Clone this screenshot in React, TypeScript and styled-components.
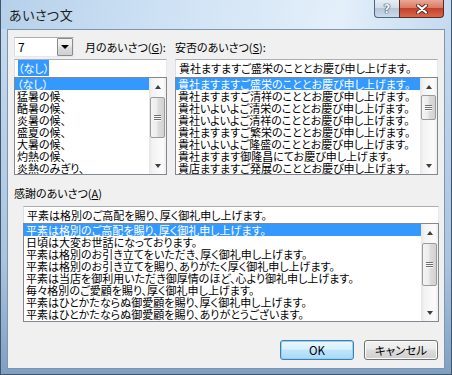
import * as React from 'react'
import styled, { createGlobalStyle } from 'styled-components';

const GlobalStyle = createGlobalStyle`
	html, body {
		margin: 0;
		padding: 0;
		background: #ffffff;
	}
	* {
		box-sizing: border-box;
	}
`

const uiFont = `"Noto Sans CJK JP", "Noto Sans", sans-serif`

const Window = styled.div`
	width: 452px;
	height: 375px;
	display: flex;
	flex-direction: column;
	padding: 0 6px 5px 6px;
	border: 1px solid #40566f;
	border-top: none;
	background: linear-gradient(to bottom, #c3d9ef 0, #c4d9ee 40px, #aac4df 70%, #7f9fc2 100%);
	font-family: ${uiFont};
	font-feature-settings: "palt";
	font-size: 11px;
	color: #000;
`

const TitleBar = styled.div`
	height: 29px;
	margin: 0 -6px;
	padding: 0 7px 0 8px;
	display: flex;
	justify-content: space-between;
	background: linear-gradient(100deg, #b6d0ea 0%, #cde1f4 35%, #e4effa 75%, #d7e7f6 85%, #c4daef 100%);
`

const Title = styled.span`
	align-self: center;
	margin-top: -1px;
	font-size: 13px;
	color: #1b1b1b;
	letter-spacing: 0.5px;
`

const CaptionButtons = styled.div`
	display: flex;
	align-self: flex-start;
`

const HelpButton = styled.div`
	width: 25px;
	height: 18px;
	border: 1px solid #4d6684;
	border-top: none;
	border-right: none;
	border-radius: 0 0 0 4px;
	background: linear-gradient(to bottom, #e6edf5 0, #d3dde8 45%, #b6c6d8 50%, #cbdbea 100%);
	display: flex;
	justify-content: center;
	align-items: center;
	font-family: "DejaVu Sans", sans-serif;
	font-weight: bold;
	font-size: 12px;
	color: #f4f6f8;
	text-shadow: 0 0 1px #2c3d52, 0 0 1px #2c3d52, 0 0 1px #2c3d52;
`

const CloseButton = styled.div`
	width: 45px;
	height: 18px;
	border: 1px solid #5b2a24;
	border-top: none;
	border-radius: 0 0 4px 0;
	background: linear-gradient(to bottom, #e9a898 0, #dc7a64 45%, #c4402a 50%, #d7694d 100%);
	display: flex;
	justify-content: center;
	align-items: center;
`

const Client = styled.div`
	flex: 1;
	display: flex;
	flex-direction: column;
	background: #f0f0f0;
	border: 1px solid #7f95ad;
	padding: 7px 5px 0 6px;
`

const TopGrid = styled.div`
	display: grid;
	grid-template-columns: 153px 263px;
	column-gap: 8px;
	row-gap: 2px;
`

const LabelRow = styled.div`
	height: 20px;
	display: flex;
	align-items: center;
`

const Label = styled.span<{ $indent?: number }>`
	line-height: 13px;
	margin-left: ${p => p.$indent || 0}px;
	white-space: nowrap;
`

const Combo = styled.div`
	width: 60px;
	height: 20px;
	flex-shrink: 0;
	display: flex;
	background: #fff;
	border: 1px solid #abadb3;
	border-left-color: #dbdfe6;
	border-right-color: #e3e9ef;
	border-bottom-color: #e3e9ef;
`

const ComboText = styled.span`
	flex: 1;
	padding: 2px 0 0 3px;
	line-height: 14px;
	font-size: 12px;
`

const DropButton = styled.div`
	width: 16px;
	border: 1px solid #8b8b8b;
	border-radius: 1px;
	background: linear-gradient(to bottom, #f2f2f2 0, #ebebeb 45%, #dddddd 50%, #cfcfcf 100%);
	display: flex;
	justify-content: center;
	align-items: center;
	&::after {
		content: "";
		border-left: 4px solid transparent;
		border-right: 4px solid transparent;
		border-top: 4px solid #000;
	}
`

const Stack = styled.div`
	display: flex;
	flex-direction: column;
`

const Edit = styled.div<{ $height: number }>`
	height: ${p => p.$height}px;
	background: #fff;
	border: 1px solid #abadb3;
	border-left-color: #dbdfe6;
	border-right-color: #e3e9ef;
	border-bottom: none;
	padding: 2px 2px 0 3px;
	line-height: 13px;
	white-space: nowrap;
	overflow: hidden;
`

const EditSelection = styled.span`
	background: #3399ff;
	color: #fff;
`

const ListBox = styled.div<{ $height: number }>`
	height: ${p => p.$height}px;
	display: flex;
	background: #fff;
	border: 1px solid #828790;
`

const Items = styled.div`
	flex: 1;
	overflow: hidden;
`

const Item = styled.div<{ $selected?: boolean }>`
	height: 12px;
	line-height: 12px;
	padding-left: 2px;
	white-space: nowrap;
	background: ${p => (p.$selected ? '#3399ff' : 'transparent')};
	color: ${p => (p.$selected ? '#fff' : '#000')};
`

const ScrollBar = styled.div`
	width: 17px;
	flex-shrink: 0;
	display: flex;
	flex-direction: column;
	background: linear-gradient(to right, #e6e6e6 0, #f3f3f3 20%, #fbfbfb 80%, #eeeeee 100%);
`

const Arrow = styled.div<{ $down?: boolean }>`
	height: 17px;
	display: flex;
	justify-content: center;
	align-items: center;
	&::after {
		content: "";
		border-left: 3.5px solid transparent;
		border-right: 3.5px solid transparent;
		${p => (p.$down ? 'border-top: 4px solid #3f3f3f;' : 'border-bottom: 4px solid #3f3f3f;')}
	}
`

const Track = styled.div`
	flex: 1;
	position: relative;
`

const Thumb = styled.div`
	position: absolute;
	left: 1px;
	right: 1px;
	border: 1px solid #9a9a9a;
	border-radius: 2px;
	background: linear-gradient(to right, #f4f4f4 0, #ececec 45%, #dcdcdc 55%, #d2d2d2 100%);
	display: flex;
	flex-direction: column;
	justify-content: center;
	align-items: center;
	gap: 1px;
`

const Grip = styled.span`
	width: 7px;
	height: 1px;
	background: #6f6f6f;
	box-shadow: 0 1px 0 #fafafa;
`

const SectionLabel = styled.div`
	margin-top: 12px;
	line-height: 13px;
`

const Lower = styled.div`
	margin: 6px 0 0 9px;
	display: flex;
	flex-direction: column;
`

const ButtonRow = styled.div`
	margin-top: 18px;
	padding-right: 1px;
	display: flex;
	justify-content: flex-end;
	gap: 10px;
`

const Button = styled.div<{ $default?: boolean }>`
	width: 74px;
	height: 20px;
	display: flex;
	justify-content: center;
	align-items: center;
	border-radius: 3px;
	border: 1px solid ${p => (p.$default ? '#3c7fb1' : '#707070')};
	background: ${p => (p.$default
		? 'linear-gradient(to bottom, #eaf6fd 0, #d9f0fc 45%, #bee6fd 50%, #a7d9f5 100%)'
		: 'linear-gradient(to bottom, #f2f2f2 0, #ebebeb 45%, #dddddd 50%, #cfcfcf 100%)')};
	box-shadow: inset 0 0 0 1px ${p => (p.$default ? '#98d1ef' : '#fcfcfc')};
	font-size: 11.5px;
`

const monthItems = ['（なし）', '猛暑の候、', '酷暑の候、', '炎暑の候、', '盛夏の候、', '大暑の候、', '灼熱の候、', '炎熱のみぎり、']

const healthItems = [
	'貴社ますますご盛栄のこととお慶び申し上げます。',
	'貴社ますますご清祥のこととお慶び申し上げます。',
	'貴社いよいよご清栄のこととお慶び申し上げます。',
	'貴社いよいよご清祥のこととお慶び申し上げます。',
	'貴社ますますご繁栄のこととお慶び申し上げます。',
	'貴社いよいよご隆盛のこととお慶び申し上げます。',
	'貴社ますます御隆昌にてお慶び申し上げます。',
	'貴店ますますご発展のこととお慶び申し上げます。',
]

const thanksItems = [
	'平素は格別のご高配を賜り、厚く御礼申し上げます。',
	'日頃は大変お世話になっております。',
	'平素は格別のお引き立てをいただき、厚く御礼申し上げます。',
	'平素は格別のお引き立てを賜り、ありがたく厚く御礼申し上げます。',
	'平素は当店を御利用いただき御厚情のほど、心より御礼申し上げます。',
	'毎々格別のご愛顧を賜り、厚く御礼申し上げます。',
	'平素はひとかたならぬ御愛顧を賜り、厚く御礼申し上げます。',
	'平素はひとかたならぬ御愛顧を賜り、ありがとうございます。',
]

type ListProps = {
	items: string[]
	height: number
	thumbTop: number
	thumbHeight: number
}

const List = ({ items, height, thumbTop, thumbHeight }: ListProps) => (
	<ListBox $height={height}>
		<Items>
			{items.map((text, i) => (
				<Item key={text} $selected={i === 0}>{text}</Item>
			))}
		</Items>
		<ScrollBar>
			<Arrow />
			<Track>
				<Thumb style={{ top: thumbTop, height: thumbHeight }}>
					<Grip />
					<Grip />
					<Grip />
				</Thumb>
			</Track>
			<Arrow $down />
		</ScrollBar>
	</ListBox>
)

const App = () => {
	return (
		<Window>
			<GlobalStyle />
			<TitleBar>
				<Title>あいさつ文</Title>
				<CaptionButtons>
					<HelpButton>?</HelpButton>
					<CloseButton>
						<svg width="14" height="10" viewBox="0 0 14 10">
							<path d="M3 1.5 L11 8.5 M11 1.5 L3 8.5" stroke="#5a2a22" strokeWidth="4" strokeLinecap="round" />
							<path d="M3 1.5 L11 8.5 M11 1.5 L3 8.5" stroke="#ffffff" strokeWidth="2.2" strokeLinecap="round" />
						</svg>
					</CloseButton>
				</CaptionButtons>
			</TitleBar>
			<Client>
				<TopGrid>
					<LabelRow>
						<Combo>
							<ComboText>7</ComboText>
							<DropButton />
						</Combo>
						<Label $indent={11}>月のあいさつ(<u>G</u>):</Label>
					</LabelRow>
					<LabelRow>
						<Label>安否のあいさつ(<u>S</u>):</Label>
					</LabelRow>
					<Stack>
						<Edit $height={18}><EditSelection>（なし）</EditSelection></Edit>
						<List items={monthItems} height={98} thumbTop={2} thumbHeight={41} />
					</Stack>
					<Stack>
						<Edit $height={18}>{healthItems[0]}</Edit>
						<List items={healthItems} height={98} thumbTop={0} thumbHeight={25} />
					</Stack>
				</TopGrid>
				<SectionLabel>感謝のあいさつ(<u>A</u>)</SectionLabel>
				<Lower>
					<Edit $height={17}>{thanksItems[0]}</Edit>
					<List items={thanksItems} height={99} thumbTop={2} thumbHeight={43} />
				</Lower>
				<ButtonRow>
					<Button $default>OK</Button>
					<Button>キャンセル</Button>
				</ButtonRow>
			</Client>
		</Window>
	)
}

export default App;
